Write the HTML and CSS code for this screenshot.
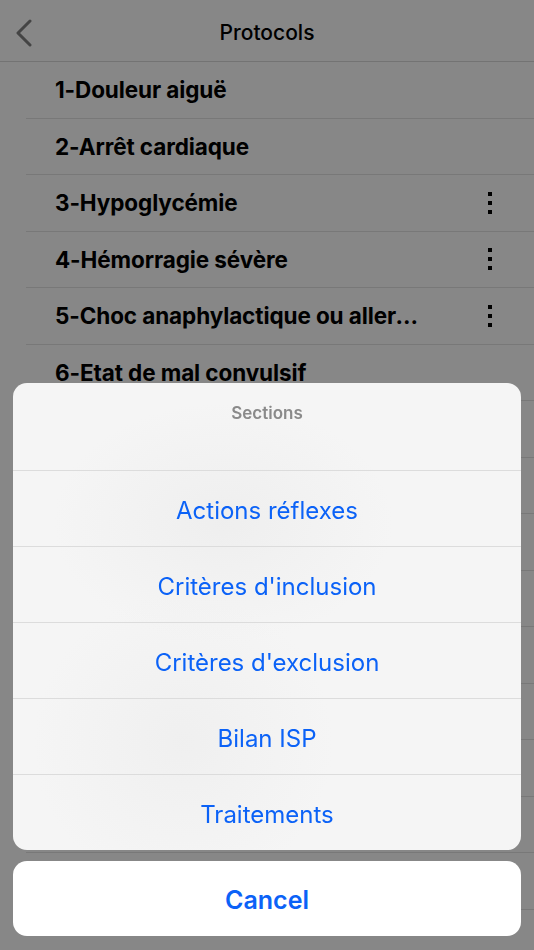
FILE: index.html
```html
<!DOCTYPE html>
<html lang="fr">
<head>
  <meta charset="UTF-8" />
  <meta name="viewport" content="width=device-width, initial-scale=1.0"/>
  <title>Protocols</title>
  <link rel="stylesheet" href="styles.css">
</head>
<body>

<div class="screen">
  <!-- Navigation bar -->
  <header class="nav-bar">
    <button class="back-btn" aria-label="Back">
      <svg width="18" height="28" viewBox="0 0 18 28">
        <path d="M15 2 L3 14 L15 26" fill="none" stroke="currentColor" stroke-width="3" stroke-linecap="round" stroke-linejoin="round"/>
      </svg>
    </button>
    <h1 class="nav-title">Protocols</h1>
  </header>

  <!-- Protocol list -->
  <ul class="protocol-list">
    <li class="protocol-row"><span class="protocol-name">1-Douleur aiguë</span></li>
    <li class="protocol-row"><span class="protocol-name">2-Arrêt cardiaque</span></li>
    <li class="protocol-row"><span class="protocol-name">3-Hypoglycémie</span><span class="kebab"><i></i><i></i><i></i></span></li>
    <li class="protocol-row"><span class="protocol-name">4-Hémorragie sévère</span><span class="kebab"><i></i><i></i><i></i></span></li>
    <li class="protocol-row"><span class="protocol-name">5-Choc anaphylactique ou allergique</span><span class="kebab"><i></i><i></i><i></i></span></li>
    <li class="protocol-row"><span class="protocol-name">6-Etat de mal convulsif</span></li>
    <li class="protocol-row"></li>
    <li class="protocol-row"></li>
    <li class="protocol-row"></li>
    <li class="protocol-row"></li>
    <li class="protocol-row"></li>
    <li class="protocol-row"></li>
    <li class="protocol-row"></li>
    <li class="protocol-row"></li>
    <li class="protocol-row"></li>
  </ul>
</div>

<!-- Action sheet -->
<div class="sheet-backdrop">
  <div class="sheet-group">
    <div class="sheet-title">Sections</div>
    <button class="sheet-action">Actions réflexes</button>
    <button class="sheet-action">Critères d'inclusion</button>
    <button class="sheet-action">Critères d'exclusion</button>
    <button class="sheet-action">Bilan ISP</button>
    <button class="sheet-action">Traitements</button>
  </div>
  <button class="sheet-cancel">Cancel</button>
</div>

</body>
</html>
```

FILE: styles.css
```css
* {
  box-sizing: border-box;
}

body {
  margin: 0;
  font-family: Inter, "Noto Sans", Arial, sans-serif;
  background: #ffffff;
  overflow: hidden;
}

.screen {
  width: 534px;
  height: 950px;
  background: #ffffff;
}

.nav-bar {
  height: 62px;
  display: flex;
  align-items: center;
  justify-content: center;
  position: relative;
  border-bottom: 1px solid #d9d9d9;
}

.back-btn {
  position: absolute;
  left: 15px;
  top: 19px;
  padding: 0;
  border: none;
  background: none;
  color: #808080;
}

.nav-title {
  margin: 4px 0 0;
  font-size: 21px;
  font-weight: 500;
  color: #000;
}

.protocol-list {
  list-style: none;
  margin: 0;
  padding: 0 0 0 26px;
}

.protocol-row {
  height: 56.5px;
  display: flex;
  align-items: center;
  padding: 0 24px 0 29px;
  border-bottom: 1px solid #e2e2e2;
}

.protocol-name {
  flex: 1;
  font-size: 22.5px;
  font-weight: 700;
  color: #000;
  white-space: nowrap;
  overflow: hidden;
  text-overflow: ellipsis;
  padding-right: 66px;
  letter-spacing: -0.1px;
}

.kebab {
  display: flex;
  flex-direction: column;
  gap: 5px;
  margin-right: 18px;
}

.kebab i {
  display: block;
  width: 4px;
  height: 4px;
  background: #000;
}

.sheet-backdrop {
  position: fixed;
  inset: 0;
  background: rgba(0, 0, 0, 0.47);
  display: flex;
  flex-direction: column;
  justify-content: flex-end;
  gap: 11px;
  padding: 0 13px 14px;
}

.sheet-group {
  border-radius: 14px;
  overflow: hidden;
  background:
    radial-gradient(ellipse 170px 120px at 210px 140px, rgba(232, 232, 232, 0.5), transparent),
    radial-gradient(ellipse 150px 150px at 170px 360px, rgba(234, 234, 234, 0.5), transparent),
    #f5f5f5;
}

.sheet-title {
  height: 88px;
  padding-top: 20px;
  text-align: center;
  font-size: 17px;
  font-weight: 600;
  color: #8a8a8a;
  border-bottom: 1px solid #dcdcdc;
}

.sheet-action {
  display: block;
  width: 100%;
  height: 76px;
  border: none;
  border-bottom: 1px solid #dcdcdc;
  background: none;
  font-family: inherit;
  font-size: 24px;
  color: #0b62f7;
  padding: 3px 0 0;
}

.sheet-action:last-child {
  border-bottom: none;
  height: 75px;
}

.sheet-cancel {
  height: 75px;
  width: 100%;
  border: none;
  border-radius: 14px;
  background: #ffffff;
  font-family: inherit;
  font-size: 25px;
  font-weight: 600;
  color: #0b62f7;
  padding: 2px 0 0;
}
```
